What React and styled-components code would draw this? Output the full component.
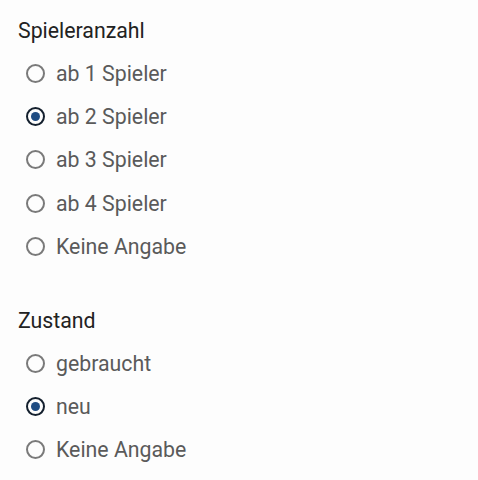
import React, { useState } from 'react'
import styled, { createGlobalStyle } from 'styled-components'

const GlobalStyle = createGlobalStyle`
  body {
    margin: 0;
    background: #fdfdfd;
    font-family: Roboto, "Liberation Sans", sans-serif;
  }
`;

const Page = styled.div`
  width: 478px;
  height: 480px;
  padding: 18px 18px 0 18px;
  box-sizing: border-box;
  display: flex;
  flex-direction: column;
  gap: 40px;
`;

const Group = styled.div`
  display: flex;
  flex-direction: column;
`;

const Title = styled.div`
  font-size: 21.3px;
  color: #222;
  line-height: 26px;
  margin-bottom: 8px;
`;

const Option = styled.label`
  display: flex;
  align-items: center;
  gap: 11px;
  height: 43.2px;
  padding-left: 8px;
  font-size: 21.3px;
  color: #5a5a5a;
  cursor: pointer;
`;

const Ring = styled.span`
  width: 19px;
  height: 19px;
  box-sizing: border-box;
  border-radius: 50%;
  border: 2px solid ${p => (p.$checked ? '#14202e' : '#7a7a7a')};
  display: flex;
  align-items: center;
  justify-content: center;
  &::after {
    content: '';
    width: 9px;
    height: 9px;
    border-radius: 50%;
    background: #1f4c82;
    display: ${p => (p.$checked ? 'block' : 'none')};
  }
`;

const RadioGroup = ({ title, options, initial }) => {
  const [value, setValue] = useState(initial)
  return (
    <Group>
      <Title>{title}</Title>
      {options.map((o) => (
        <Option key={o} onClick={() => setValue(o)}>
          <Ring $checked={value === o} />
          {o}
        </Option>
      ))}
    </Group>
  )
}

const App = () => {
  return (
    <>
      <GlobalStyle />
      <Page>
        <RadioGroup
          title="Spieleranzahl"
          options={['ab 1 Spieler', 'ab 2 Spieler', 'ab 3 Spieler', 'ab 4 Spieler', 'Keine Angabe']}
          initial="ab 2 Spieler"
        />
        <RadioGroup
          title="Zustand"
          options={['gebraucht', 'neu', 'Keine Angabe']}
          initial="neu"
        />
      </Page>
    </>
  )
}

export default App
